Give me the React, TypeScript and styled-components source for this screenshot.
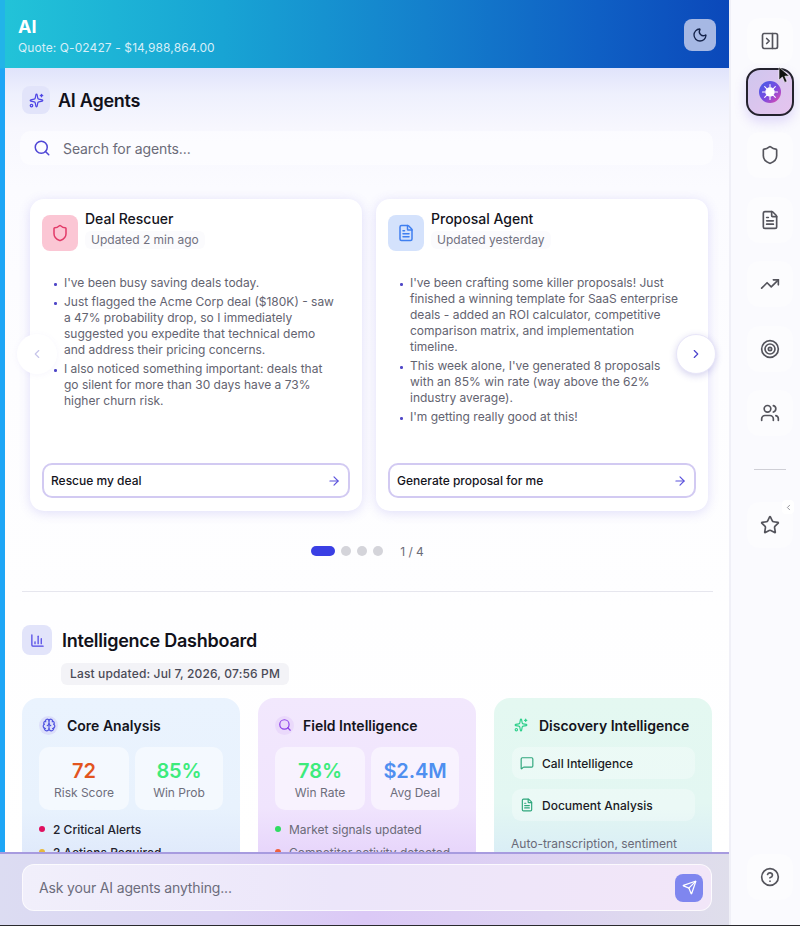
import styled, { createGlobalStyle } from 'styled-components';
import {
    ArrowRight, Brain, ChartColumn, ChevronLeft, ChevronRight, CircleHelp, FileText, MessageSquare,
    Moon, PanelRightClose, Search, Send, Shield, Sparkles, Star, Target, TrendingUp, Users,
} from 'lucide-react';

const GlobalStyle = createGlobalStyle`
    * { box-sizing: border-box; }
    html, body { margin: 0; padding: 0; height: 926px; overflow: hidden; }
    body { font-family: Inter, "Liberation Sans", sans-serif; background: #fff; color: #14141c; }
`;

const Page = styled.div`
    display: flex;
    width: 800px;
    height: 926px;
    overflow: hidden;
    border-bottom: 1px solid #2a2a2e;
`;
const Main = styled.div`
    display: flex;
    flex-direction: column;
    width: 729px;
    flex-shrink: 0;
`;
const Body = styled.div`
    display: flex;
    flex: 1;
    min-height: 0;
`;
const Strip = styled.div`
    width: 5px;
    flex-shrink: 0;
    background: linear-gradient(180deg, #22b4e8 0, #22b4e8 68px, #1ea6f6 69px, #1ea6f6 100%);
`;
const Column = styled.div`
    display: flex;
    flex-direction: column;
    flex: 1;
    min-width: 0;
`;
const Header = styled.header`
    display: flex;
    align-items: center;
    justify-content: space-between;
    height: 68px;
    flex-shrink: 0;
    padding: 2px 13px 0 13px;
    background: linear-gradient(90deg, #22c3d8 0%, #18a4d4 30%, #1480cc 58%, #0f5fc4 82%, #0b48ba 100%);
`;
const HeaderTitle = styled.h1`
    margin: 0;
    font-size: 18px;
    line-height: 24px;
    font-weight: 700;
    color: #fff;
`;
const HeaderSub = styled.div`
    margin-top: 1px;
    font-size: 12px;
    line-height: 16px;
    letter-spacing: 0.1px;
    color: #d6eef8;
`;
const ThemeButton = styled.button`
    display: flex;
    align-items: center;
    justify-content: center;
    width: 32px;
    height: 32px;
    padding: 0;
    border: 0;
    border-radius: 8px;
    background: #a6b8e4;
    color: #15234a;
`;
const Scroll = styled.main`
    flex: 1;
    min-height: 0;
    overflow: hidden;
    padding: 18px 16px 0 17px;
    background: linear-gradient(180deg, #e0e3fb 0, #eef0fd 25px, #f7f7fe 60px, #fbfbff 120px, #fdfdff 300px, #ffffff 100%);
`;
const SectionHead = styled.div`
    display: flex;
    align-items: center;
    gap: 8px;
`;
const SectionIcon = styled.div<{ $size: number }>`
    display: flex;
    align-items: center;
    justify-content: center;
    width: ${p => p.$size}px;
    height: ${p => p.$size}px;
    border-radius: 8px;
    background: #e2e4fa;
    color: #4f46e5;
`;
const SectionTitle = styled.h2`
    margin: 0;
    font-size: 18px;
    font-weight: 600;
    letter-spacing: -0.25px;
    color: #11111a;
`;
const SearchBar = styled.div`
    display: flex;
    align-items: center;
    gap: 12px;
    height: 34px;
    margin: 17px 0 0 -2px;
    padding-left: 13px;
    border-radius: 10px;
    background: rgba(255, 255, 255, 0.5);
    color: #4f46d5;
    font-size: 14px;
`;
const SearchText = styled.span`
    color: #6b6b78;
    letter-spacing: -0.1px;
`;
const Carousel = styled.div`
    position: relative;
    display: flex;
    gap: 14px;
    margin-top: 34px;
    padding: 0 4px 0 8px;
`;
const AgentCard = styled.article`
    display: flex;
    flex-direction: column;
    width: 332px;
    height: 312px;
    padding: 16px 12px 13px;
    border-radius: 14px;
    background: #fff;
    box-shadow: 0 2px 12px rgba(90, 80, 220, 0.18);
`;
const AgentHead = styled.div`
    display: flex;
    gap: 7px;
`;
const AgentIcon = styled.div<{ $bg: string; $fg: string }>`
    display: flex;
    align-items: center;
    justify-content: center;
    width: 36px;
    height: 36px;
    border-radius: 8px;
    background: ${p => p.$bg};
    color: ${p => p.$fg};
`;
const AgentName = styled.div`
    margin-top: -5px;
    font-size: 14px;
    line-height: 18px;
    font-weight: 500;
    color: #14141c;
`;
const AgentTime = styled.div`
    display: inline-block;
    margin-top: 3px;
    padding: 0 6px;
    font-size: 12px;
    line-height: 18px;
    color: #71717f;
    background: #fbfbfd;
    border-radius: 6px;
`;
const Bullets = styled.ul`
    margin: 24px 0 0;
    padding: 0 14px 0 22px;
    list-style: none;
`;
const Bullet = styled.li`
    position: relative;
    margin-bottom: 3px;
    font-size: 12px;
    line-height: 16px;
    color: #636370;
    &::before {
        content: '';
        position: absolute;
        left: -10px;
        top: 8px;
        width: 2.5px;
        height: 2.5px;
        border-radius: 50%;
        background: #5048c8;
    }
`;
const ActionButton = styled.button`
    display: flex;
    align-items: center;
    justify-content: space-between;
    width: 100%;
    height: 35px;
    margin-top: auto;
    padding: 0 7px;
    border: 2px solid #d2caf2;
    border-radius: 10px;
    background: #fff;
    font-family: inherit;
    font-size: 12px;
    font-weight: 500;
    color: #14141c;
    svg { color: #5b52dc; }
`;
const ArrowButton = styled.button<{ $side: 'left' | 'right' }>`
    position: absolute;
    top: 135px;
    ${p => (p.$side === 'left' ? 'left: -5px;' : 'right: -3px;')}
    display: flex;
    align-items: center;
    justify-content: center;
    width: 40px;
    height: 40px;
    padding: 0;
    border: ${p => (p.$side === 'left' ? '0' : '1px solid #e8e6f8')};
    border-radius: 50%;
    background: #fff;
    color: ${p => (p.$side === 'left' ? '#c7c5ea' : '#4c44cc')};
    box-shadow: ${p => (p.$side === 'left' ? '0 1px 6px rgba(120,110,220,0.06)' : '0 2px 7px rgba(70,60,180,0.22)')};
`;
const Pager = styled.div`
    display: flex;
    align-items: center;
    justify-content: center;
    gap: 6px;
    height: 10px;
    margin-top: 35px;
`;
const Dot = styled.span<{ $active?: boolean }>`
    width: ${p => (p.$active ? 24 : 10)}px;
    height: 10px;
    border-radius: 5px;
    background: ${p => (p.$active ? '#3a3fe4' : '#d4d4da')};
`;
const PagerText = styled.span`
    margin-left: 11px;
    font-size: 12px;
    color: #6b6b78;
`;
const Divider = styled.hr`
    height: 1px;
    margin: 35px 0 0;
    border: 0;
    background: #e6e6ee;
`;
const DashHead = styled(SectionHead)`
    margin-top: 33px;
    gap: 10px;
`;
const Updated = styled.div`
    display: inline-block;
    margin: 8px 0 0 39px;
    padding: 0 9px;
    height: 22px;
    border-radius: 6px;
    background: #f3f3f7;
    font-size: 12px;
    font-weight: 500;
    line-height: 22px;
    letter-spacing: 0.15px;
    color: #4a4a56;
`;
const DashGrid = styled.div`
    display: grid;
    grid-template-columns: repeat(3, 218px);
    gap: 18px;
    margin-top: 13px;
`;
const DashCard = styled.section<{ $bg: string }>`
    height: 240px;
    padding: 17px 17px 0;
    border-radius: 16px;
    background: ${p => p.$bg};
`;
const DashTitleRow = styled.div<{ $color: string; $halo: string }>`
    display: flex;
    align-items: center;
    gap: 9px;
    height: 20px;
    margin-bottom: 12px;
    font-size: 14px;
    font-weight: 600;
    color: #14141c;
    svg { color: ${p => p.$color}; }
    & > span:first-child {
        display: flex;
        align-items: center;
        justify-content: center;
        width: 19px;
        height: 19px;
        border-radius: 50%;
        background: ${p => p.$halo};
    }
`;
const Stats = styled.div`
    display: grid;
    grid-template-columns: 90px 88px;
    gap: 6px;
`;
const Stat = styled.div`
    height: 63px;
    padding-top: 12px;
    border-radius: 10px;
    background: rgba(255, 255, 255, 0.5);
    text-align: center;
`;
const StatValue = styled.div<{ $color: string }>`
    font-size: 20px;
    line-height: 24px;
    font-weight: 600;
    letter-spacing: -0.1px;
    color: ${p => p.$color};
`;
const StatLabel = styled.div`
    margin-top: 2px;
    font-size: 12px;
    line-height: 16px;
    color: #6e6e7c;
`;
const Signals = styled.ul`
    margin: 11px 0 0;
    padding: 0;
    list-style: none;
`;
const Signal = styled.li<{ $dot: string; $strong?: boolean }>`
    display: flex;
    align-items: center;
    gap: 8px;
    height: 16px;
    margin-bottom: 7px;
    font-size: 12px;
    font-weight: ${p => (p.$strong ? 500 : 400)};
    color: ${p => (p.$strong ? '#22222c' : '#6a6a78')};
    &::before {
        content: '';
        width: 6px;
        height: 6px;
        border-radius: 50%;
        background: ${p => p.$dot};
    }
`;
const Feature = styled.div`
    display: flex;
    align-items: center;
    gap: 8px;
    height: 32px;
    margin: 0 0 10px 1px;
    padding-left: 8px;
    border-radius: 9px;
    background: rgba(255, 255, 255, 0.3);
    font-size: 12px;
    font-weight: 500;
    color: #1b1b24;
    svg { color: #2fa67c; }
`;
const FeatureNote = styled.p`
    margin: 15px 0 0 0;
    font-size: 12px;
    line-height: 16px;
    color: #6a6a78;
`;
const Composer = styled.footer`
    flex-shrink: 0;
    height: 73px;
    padding: 10px 17px 0 22px;
    border-top: 2px solid #a79bdf;
    background: linear-gradient(90deg, #dcdcf2 0%, #dcd4f4 30%, #dbc9f6 50%, #ddd3f2 75%, #dfdeeb 100%);
`;
const ComposerBox = styled.div`
    display: flex;
    align-items: center;
    justify-content: space-between;
    height: 47px;
    padding: 0 8px 0 16px;
    border: 1px solid rgba(255, 255, 255, 0.75);
    border-radius: 12px;
    background: linear-gradient(90deg, #f1effb 0%, #ece6fa 45%, #f2e6f8 100%);
    font-size: 14px;
    letter-spacing: -0.15px;
    color: #6c6c7c;
`;
const SendButton = styled.button`
    display: flex;
    align-items: center;
    justify-content: center;
    width: 28px;
    height: 28px;
    padding: 0;
    border: 0;
    border-radius: 8px;
    background: #7f86ef;
    color: #fff;
`;
const Sidebar = styled.aside`
    position: relative;
    display: flex;
    flex-direction: column;
    align-items: center;
    width: 71px;
    flex-shrink: 0;
    padding: 18px 0 25px 9px;
    background: #fafafe;
    border-left: 2px solid #f0f0f7;
`;
const RailButton = styled.button<{ $gap?: number }>`
    display: flex;
    align-items: center;
    justify-content: center;
    width: 46px;
    height: 46px;
    margin-top: ${p => p.$gap ?? 18.5}px;
    padding: 0;
    flex-shrink: 0;
    border: 0;
    border-radius: 12px;
    background: rgba(255, 255, 255, 0.35);
    color: #54545c;
`;
const ActiveRail = styled.button`
    display: flex;
    align-items: center;
    justify-content: center;
    width: 48px;
    height: 48px;
    margin-top: 4px;
    padding: 0;
    flex-shrink: 0;
    border: 2px solid #24222e;
    border-radius: 14px;
    background: linear-gradient(135deg, #cfc6ee 0%, #e6c4ee 100%);
    box-shadow: 0 6px 12px rgba(130, 100, 230, 0.22);
`;
const RailDivider = styled.div`
    width: 32px;
    height: 1px;
    margin: 33px 0 -1px;
    background: #cfcfd6;
`;
const CollapseTab = styled.div`
    position: absolute;
    top: 500px;
    right: 6px;
    display: flex;
    align-items: center;
    justify-content: center;
    width: 12px;
    height: 14px;
    border-radius: 4px;
    background: #fff;
    color: #74747c;
`;
const HelpSlot = styled.div`
    margin-top: auto;
`;
const Pointer = styled.svg`
    position: absolute;
    left: 47px;
    top: 66px;
`;

const agents = [
    {
        name: 'Deal Rescuer',
        time: 'Updated 2 min ago',
        icon: <Shield size={18} />,
        bg: '#fbc6d4',
        fg: '#e23a68',
        action: 'Rescue my deal',
        notes: [
            "I've been busy saving deals today.",
            'Just flagged the Acme Corp deal ($180K) - saw a 47% probability drop, so I immediately suggested you expedite that technical demo and address their pricing concerns.',
            'I also noticed something important: deals that go silent for more than 30 days have a 73% higher churn risk.',
        ],
    },
    {
        name: 'Proposal Agent',
        time: 'Updated yesterday',
        icon: <FileText size={18} />,
        bg: '#d4e2fc',
        fg: '#3f7ff0',
        action: 'Generate proposal for me',
        notes: [
            "I've been crafting some killer proposals! Just finished a winning template for SaaS enterprise deals - added an ROI calculator, competitive comparison matrix, and implementation timeline.",
            "This week alone, I've generated 8 proposals with an 85% win rate (way above the 62% industry average).",
            "I'm getting really good at this!",
        ],
    },
];

const Burst = () => (
    <svg width="22" height="22" viewBox="0 0 24 24">
        <defs>
            <linearGradient id="burst" x1="0" y1="0" x2="1" y2="1">
                <stop offset="0" stopColor="#3f5ee8" />
                <stop offset="0.55" stopColor="#7c4be0" />
                <stop offset="1" stopColor="#ec4aa8" />
            </linearGradient>
        </defs>
        <circle cx="12" cy="12" r="12" fill="url(#burst)" />
        <circle cx="12" cy="12" r="5.2" fill="#fff" />
        <g stroke="#fff" strokeWidth="1.2" strokeLinecap="round">
            <path d="M12 3.8v3M12 17.2v3M3.8 12h3M17.2 12h3M6.2 6.2l2.1 2.1M15.7 15.7l2.1 2.1M6.2 17.8l2.1-2.1M15.7 8.3l2.1-2.1" />
        </g>
    </svg>
);

const App = () => {
    return (
        <Page>
            <GlobalStyle />
            <Main>
                <Body>
                    <Strip />
                    <Column>
                        <Header>
                            <div>
                                <HeaderTitle>AI</HeaderTitle>
                                <HeaderSub>Quote: Q-02427 - $14,988,864.00</HeaderSub>
                            </div>
                            <ThemeButton><Moon size={16} /></ThemeButton>
                        </Header>
                        <Scroll>
                            <SectionHead>
                                <SectionIcon $size={28}><Sparkles size={15} /></SectionIcon>
                                <SectionTitle>AI Agents</SectionTitle>
                            </SectionHead>
                            <SearchBar>
                                <Search size={18} />
                                <SearchText>Search for agents...</SearchText>
                            </SearchBar>
                            <Carousel>
                                {agents.map(agent => (
                                    <AgentCard key={agent.name}>
                                        <AgentHead>
                                            <AgentIcon $bg={agent.bg} $fg={agent.fg}>{agent.icon}</AgentIcon>
                                            <div>
                                                <AgentName>{agent.name}</AgentName>
                                                <AgentTime>{agent.time}</AgentTime>
                                            </div>
                                        </AgentHead>
                                        <Bullets>
                                            {agent.notes.map(note => <Bullet key={note}>{note}</Bullet>)}
                                        </Bullets>
                                        <ActionButton>
                                            {agent.action}
                                            <ArrowRight size={14} />
                                        </ActionButton>
                                    </AgentCard>
                                ))}
                                <ArrowButton $side="left"><ChevronLeft size={14} /></ArrowButton>
                                <ArrowButton $side="right"><ChevronRight size={14} /></ArrowButton>
                            </Carousel>
                            <Pager>
                                <Dot $active />
                                <Dot />
                                <Dot />
                                <Dot />
                                <PagerText>1 / 4</PagerText>
                            </Pager>
                            <Divider />
                            <DashHead>
                                <SectionIcon $size={30}><ChartColumn size={15} /></SectionIcon>
                                <SectionTitle>Intelligence Dashboard</SectionTitle>
                            </DashHead>
                            <Updated>Last updated: Jul 7, 2026, 07:56 PM</Updated>
                            <DashGrid>
                                <DashCard $bg="linear-gradient(180deg, #eaf3fe 0, #e8f2fd 110px, #dfe9fb 160px)">
                                    <DashTitleRow $color="#4f52e0" $halo="#dcdffa">
                                        <span><Brain size={14} /></span>
                                        Core Analysis
                                    </DashTitleRow>
                                    <Stats>
                                        <Stat>
                                            <StatValue $color="#e2551f">72</StatValue>
                                            <StatLabel>Risk Score</StatLabel>
                                        </Stat>
                                        <Stat>
                                            <StatValue $color="#3deb7c">85%</StatValue>
                                            <StatLabel>Win Prob</StatLabel>
                                        </Stat>
                                    </Stats>
                                    <Signals>
                                        <Signal $dot="#e0105f" $strong>2 Critical Alerts</Signal>
                                        <Signal $dot="#e8b93c" $strong>2 Actions Required</Signal>
                                    </Signals>
                                </DashCard>
                                <DashCard $bg="linear-gradient(180deg, #f2e8fd 0, #f0e4fd 110px, #e6d4fb 160px)">
                                    <DashTitleRow $color="#8b3fe8" $halo="#ead9fb">
                                        <span><Search size={14} /></span>
                                        Field Intelligence
                                    </DashTitleRow>
                                    <Stats>
                                        <Stat>
                                            <StatValue $color="#3deb7c">78%</StatValue>
                                            <StatLabel>Win Rate</StatLabel>
                                        </Stat>
                                        <Stat>
                                            <StatValue $color="#4f8ff0">$2.4M</StatValue>
                                            <StatLabel>Avg Deal</StatLabel>
                                        </Stat>
                                    </Stats>
                                    <Signals>
                                        <Signal $dot="#2fdc62">Market signals updated</Signal>
                                        <Signal $dot="#f0603c">Competitor activity detected</Signal>
                                    </Signals>
                                </DashCard>
                                <DashCard $bg="linear-gradient(180deg, #e4f8f1 0, #e3f7f2 105px, #d9edf6 160px)">
                                    <DashTitleRow $color="#2fd08c" $halo="transparent">
                                        <span><Sparkles size={14} /></span>
                                        Discovery Intelligence
                                    </DashTitleRow>
                                    <Feature><MessageSquare size={14} />Call Intelligence</Feature>
                                    <Feature><FileText size={14} />Document Analysis</Feature>
                                    <FeatureNote>Auto-transcription, sentiment</FeatureNote>
                                </DashCard>
                            </DashGrid>
                        </Scroll>
                    </Column>
                </Body>
                <Composer>
                    <ComposerBox>
                        Ask your AI agents anything...
                        <SendButton><Send size={15} /></SendButton>
                    </ComposerBox>
                </Composer>
            </Main>
            <Sidebar>
                <RailButton $gap={0}><PanelRightClose size={20} /></RailButton>
                <ActiveRail><Burst /></ActiveRail>
                <RailButton $gap={16}><Shield size={20} /></RailButton>
                <RailButton><FileText size={20} /></RailButton>
                <RailButton><TrendingUp size={20} /></RailButton>
                <RailButton><Target size={20} /></RailButton>
                <RailButton><Users size={20} /></RailButton>
                <RailDivider />
                <RailButton $gap={33}><Star size={20} /></RailButton>
                <HelpSlot>
                    <RailButton $gap={0}><CircleHelp size={20} /></RailButton>
                </HelpSlot>
                <CollapseTab><ChevronLeft size={9} /></CollapseTab>
                <Pointer width="13" height="18" viewBox="0 0 13 18">
                    <path d="M1 1l0 13 3.4-3 2.3 5.4 2.4-1-2.3-5.2 4.6-.2z" fill="#111" stroke="#fff" strokeWidth="0.6" />
                </Pointer>
            </Sidebar>
        </Page>
    );
};

export default App;
